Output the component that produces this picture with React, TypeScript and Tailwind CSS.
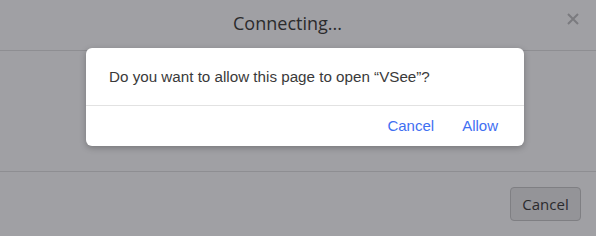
import React from "react";

export default function App() {
  return (
    <div className="relative w-[596px] h-[236px] overflow-hidden bg-[#a0a0a4]" style={{ fontFamily: '"Open Sans", "Noto Sans", sans-serif' }}>
      <div className="flex flex-col h-full">
        <div className="relative h-[51px] border-b border-[#8e8e92] flex items-center justify-center pr-[21px] pb-[5px]">
          <span className="text-[18px] text-[#2b2b2d] leading-none">Connecting...</span>
          <svg className="absolute right-[17px] top-[13px]" width="12" height="12" viewBox="0 0 12 12">
            <path d="M1 1 L11 11 M11 1 L1 11" stroke="#7b7b7f" strokeWidth="2" />
          </svg>
        </div>
        <div className="h-[121px] border-b border-[#8e8e92]" />
        <div className="flex-1 flex justify-end items-start pt-[15px] pr-[15px]">
          <button className="w-[71px] h-[34px] rounded-[4px] border border-[#7f7f83] bg-[#949498] text-[15px] text-[#2b2b2d]">Cancel</button>
        </div>
      </div>
      <div
        className="absolute left-[86px] top-[48px] w-[438px] h-[98px] bg-white rounded-[6px] shadow-[0_2px_6px_rgba(0,0,0,0.25)] flex flex-col"
        style={{ fontFamily: '"Liberation Sans", Arial, sans-serif' }}
      >
        <div className="h-[58px] border-b border-[#e2e2e2] flex items-center pl-[23px] pt-[2px]">
          <span className="text-[15.2px] text-[#3a3a3a]">Do you want to allow this page to open “VSee”?</span>
        </div>
        <div className="flex-1 flex items-center justify-end pr-[26px] gap-[28px] text-[15px] text-[#3f6ff2]">
          <span>Cancel</span>
          <span>Allow</span>
        </div>
      </div>
    </div>
  );
}
